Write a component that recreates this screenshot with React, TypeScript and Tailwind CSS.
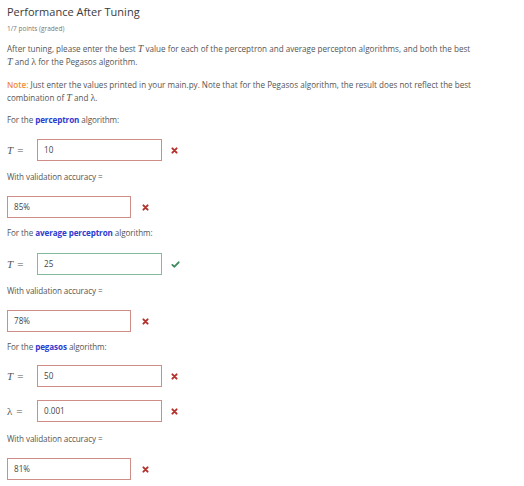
import React from "react";

const FONT = { fontFamily: '"Open Sans", "Liberation Sans", sans-serif' };

function MathT() {
  return <span className="italic" style={{ fontFamily: '"Liberation Serif", serif' }}>T</span>;
}

function MathL() {
  return <span style={{ fontFamily: '"Liberation Serif", serif' }}>λ</span>;
}

function Cross() {
  return (
    <svg width="7" height="7" viewBox="0 0 10 10" className="shrink-0">
      <path d="M2 2 L8 8 M8 2 L2 8" stroke="#b3322b" strokeWidth="2.8" strokeLinecap="round" />
    </svg>
  );
}

function Check() {
  return (
    <svg width="9" height="7" viewBox="0 0 12 10" className="shrink-0">
      <path d="M1.5 5.5 L4.5 8.2 L10.5 1.8" stroke="#3d8a5c" strokeWidth="2.6" fill="none" strokeLinecap="round" strokeLinejoin="round" />
    </svg>
  );
}

function Box({ value, ok, width = "w-[125px]" }: { value: string; ok?: boolean; width?: string }) {
  return (
    <div
      className={`${width} h-[22px] flex items-center pl-[6px] text-[8.1px] text-[#444] bg-white border ${
        ok ? "border-[#86b99c]" : "border-[#cf8d87]"
      }`}
    >
      {value}
    </div>
  );
}

function MathRow({ label, value, ok, className }: { label: React.ReactNode; value: string; ok?: boolean; className: string }) {
  return (
    <div className={`flex items-center ${className}`}>
      <div
        className="w-[30px] flex items-center gap-[4px] text-[11px] text-[#555]"
        style={{ fontFamily: '"Liberation Serif", serif' }}
      >
        {label}
        <span>=</span>
      </div>
      <Box value={value} ok={ok} />
      <div className="ml-[9px]">{ok ? <Check /> : <Cross />}</div>
    </div>
  );
}

function AccRow({ value, className }: { value: string; className: string }) {
  return (
    <div className={`flex items-center ${className}`}>
      <Box value={value} width="w-[124px]" />
      <div className="ml-[11px]">
        <Cross />
      </div>
    </div>
  );
}

function Line({ children, className }: { children: React.ReactNode; className: string }) {
  return (
    <div className={`text-[8.1px] leading-[12px] text-[#555] whitespace-nowrap tracking-[-0.1px] ${className}`}>
      {children}
    </div>
  );
}

function Alg({ name, className }: { name: string; className: string }) {
  return (
    <Line className={className}>
      For the <span className="font-bold text-[#2d3bd1]">{name}</span> algorithm:
    </Line>
  );
}

export default function App() {
  return (
    <div className="w-[524px] h-[486px] bg-white px-[7px] pt-[5px] overflow-hidden" style={FONT}>
      <div className="text-[11px] leading-[14px] text-[#3a3a3a]">Performance After Tuning</div>
      <div className="mt-[6px] text-[6.5px] leading-[8px] text-[#777]">1/7 points (graded)</div>

      <div className="mt-[9px] text-[8.1px] leading-[12px] text-[#555] whitespace-nowrap">
        After tuning, please enter the best <span className="text-[10px]"><MathT /></span> value for each of the perceptron
        and average percepton algorithms, and both the best
        <br />
        <span className="text-[10px]"><MathT /></span> and <span className="text-[10px]"><MathL /></span> for the Pegasos
        algorithm.
      </div>

      <div className="mt-[11px] text-[8.1px] leading-[12px] text-[#555] whitespace-nowrap">
        <span className="text-[#ef8a3a] font-semibold">Note:</span> Just enter the values printed in your main.py. Note
        that for the Pegasos algorithm, the result does not reflect the best
        <br />
        combination of <span className="text-[10px]"><MathT /></span> and <span className="text-[10px]"><MathL /></span>.
      </div>

      <Alg name="perceptron" className="mt-[10px]" />
      <MathRow label={<MathT />} value="10" className="mt-[13px]" />
      <Line className="mt-[10px]">With validation accuracy =</Line>
      <AccRow value="85%" className="mt-[13px]" />

      <Alg name="average perceptron" className="mt-[9px]" />
      <MathRow label={<MathT />} value="25" ok className="mt-[14px]" />
      <Line className="mt-[10px]">With validation accuracy =</Line>
      <AccRow value="78%" className="mt-[13px]" />

      <Alg name="pegasos" className="mt-[9px]" />
      <MathRow label={<MathT />} value="50" className="mt-[12px]" />
      <MathRow label={<MathL />} value="0.001" className="mt-[13px]" />
      <Line className="mt-[11px]">With validation accuracy =</Line>
      <AccRow value="81%" className="mt-[13px]" />
    </div>
  );
}
